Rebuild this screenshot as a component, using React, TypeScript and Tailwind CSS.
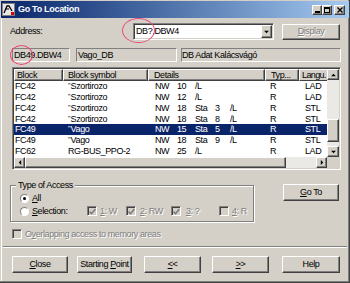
import React from "react";

const raised =
  "bg-[#d4d0c8] border border-t-white border-l-white border-r-[#404040] border-b-[#404040] shadow-[inset_-1px_-1px_0_#808080]";
const dis = "text-[#808080] [text-shadow:1px_1px_0_#fff]";

function Btn({ className, children, disabled }: { className: string; children: React.ReactNode; disabled?: boolean }) {
  return (
    <div className={`flex items-center justify-center h-[17px] ${raised} ${disabled ? dis : ""} ${className}`}>
      <span className="leading-none">{children}</span>
    </div>
  );
}

function Arrow({ dir }: { dir: "up" | "down" | "left" | "right" }) {
  const pts: Record<string, string> = {
    up: "1,4 4,1 7,4",
    down: "1,1 4,4 7,1",
    left: "4,1 1,4 4,7",
    right: "1,1 4,4 1,7",
  };
  const vb = dir === "up" || dir === "down" ? "0 0 8 5" : "0 0 5 8";
  const w = dir === "up" || dir === "down" ? 7 : 4;
  const h = dir === "up" || dir === "down" ? 4 : 7;
  return (
    <svg width={w} height={h} viewBox={vb}>
      <polygon points={pts[dir]} fill="#000" />
    </svg>
  );
}

function ArrBtn({ dir, className }: { dir: "up" | "down" | "left" | "right"; className: string }) {
  return (
    <div className={`flex items-center justify-center ${raised} ${className}`}>
      <Arrow dir={dir} />
    </div>
  );
}

function Check({ checked }: { checked: boolean }) {
  return (
    <div className="w-[10px] h-[10px] bg-[#d4d0c8] border border-t-[#808080] border-l-[#808080] border-r-white border-b-white shadow-[inset_1px_1px_0_#404040] flex items-center justify-center shrink-0">
      {checked && (
        <svg width="7" height="7" viewBox="0 0 7 7">
          <polyline points="0.5,3.5 2.5,5.5 6.5,1" fill="none" stroke="#808080" strokeWidth="1.6" />
        </svg>
      )}
    </div>
  );
}

function Radio({ on }: { on: boolean }) {
  return (
    <div className="w-[9px] h-[9px] rounded-full bg-white border border-t-[#808080] border-l-[#808080] border-r-white border-b-white flex items-center justify-center shrink-0">
      {on && <div className="w-[3px] h-[3px] rounded-full bg-black" />}
    </div>
  );
}

type Row = { b: string; s: string; q: boolean; d: string[]; t: string; l: string; sel?: boolean };
const rows: Row[] = [
  { b: "FC42", s: "Szortirozo", q: true, d: ["NW", "10", "/L"], t: "R", l: "LAD" },
  { b: "FC42", s: "Szortirozo", q: true, d: ["NW", "12", "/L"], t: "R", l: "LAD" },
  { b: "FC42", s: "Szortirozo", q: true, d: ["NW", "18", "Sta", "3", "/L"], t: "R", l: "STL" },
  { b: "FC42", s: "Szortirozo", q: true, d: ["NW", "18", "Sta", "8", "/L"], t: "R", l: "STL" },
  { b: "FC49", s: "Vago", q: true, d: ["NW", "15", "Sta", "5", "/L"], t: "R", l: "STL", sel: true },
  { b: "FC49", s: "Vago", q: true, d: ["NW", "18", "Sta", "9", "/L"], t: "R", l: "STL" },
  { b: "FC62", s: "RG-BUS_PPO-2", q: false, d: ["NW", "25", "/L"], t: "R", l: "LAD" },
];

const detW = ["w-[22px]", "w-[18px]", "w-[20px]", "w-[15px]", "w-[20px]"];

const hdr = `h-[12px] leading-[10px] overflow-hidden whitespace-nowrap bg-[#d4d0c8] border border-t-white border-l-white border-r-[#404040] border-b-[#404040] shadow-[inset_-1px_-1px_0_#808080]`;

export default function App() {
  return (
    <div className="relative w-[350px] h-[283px] bg-[#d4d0c8] overflow-hidden flex flex-col text-[9px] tracking-[-0.4px] text-black font-['Liberation_Sans',Arial,sans-serif] shadow-[inset_-1px_-1px_0_#404040,inset_-2px_-2px_0_#808080,inset_1px_1px_0_#d4d0c8,inset_2px_2px_0_#fff]">
      {/* Title bar */}
      <div className="mx-[1px] mt-[1px] h-[17px] flex items-center bg-linear-to-r from-[#0a246a] to-[#a6caf0] shrink-0">
        <svg width="13" height="13" viewBox="0 0 13 13" className="ml-[1px]">
          <rect x="0" y="0" width="13" height="13" fill="#d4d0c8" />
          <rect x="0.5" y="0.5" width="12" height="12" fill="#e8e8e8" stroke="#808080" />
          <polyline points="2,10 5,3 7,3 10,8" fill="none" stroke="#000" strokeWidth="1.3" />
          <line x1="3" y1="6" x2="7" y2="6" stroke="#000" strokeWidth="1" />
          <rect x="9" y="9" width="3" height="3" fill="#e00000" />
        </svg>
        <span className="ml-[3px] text-white font-bold text-[9px] tracking-[-0.3px] leading-none">Go To Location</span>
        <div className="flex-1" />
        <div className={`w-[10px] h-[10px] ${raised} flex items-end justify-center pb-[1px]`}>
          <div className="w-[5px] h-[2px] bg-black" />
        </div>
        <div className={`w-[10px] h-[10px] ${raised} flex items-center justify-center`}>
          <div className="w-[6px] h-[6px] border border-black border-t-2" />
        </div>
        <div className={`ml-[2px] mr-[4px] w-[11px] h-[10px] ${raised} flex items-center justify-center`}>
          <svg width="6" height="6" viewBox="0 0 6 6">
            <path d="M0.5 0.5 L5.5 5.5 M5.5 0.5 L0.5 5.5" stroke="#000" strokeWidth="1.4" />
          </svg>
        </div>
      </div>

      {/* Address row */}
      <div className="mt-[5px] h-[17px] flex items-center shrink-0">
        <span className="ml-[10px] w-[123px]">Address:</span>
        <div className="w-[141px] h-[17px] bg-white border border-t-[#808080] border-l-[#808080] border-r-white border-b-white shadow-[inset_1px_1px_0_#404040,inset_-1px_-1px_0_#d4d0c8] flex items-center">
          <span className="pl-[2px] flex-1">DB?.DBW4</span>
          <ArrBtn dir="down" className="w-[11px] h-[13px] mr-[1px]" />
        </div>
        <Btn disabled className="ml-[8px] w-[58px] !h-[16px]">
          <span className="underline underline-offset-1">D</span>isplay
        </Btn>
      </div>

      {/* Info fields */}
      <div className="mt-[8px] h-[14px] flex shrink-0">
        <div className="ml-[12px] w-[58px] h-[14px] border border-t-[#808080] border-l-[#808080] border-r-white border-b-white pl-[1px] leading-[12px]">DB49.DBW4</div>
        <div className="ml-[6px] w-[101px] h-[14px] border border-t-[#808080] border-l-[#808080] border-r-white border-b-white pl-[1px] leading-[12px]">Vago_DB</div>
        <div className="ml-[4px] w-[160px] h-[14px] border border-t-[#808080] border-l-[#808080] border-r-white border-b-white leading-[12px]">DB Adat Kalácsvágó</div>
      </div>

      {/* Table */}
      <div className="mt-[5px] ml-[12px] w-[329px] h-[103px] shrink-0 border border-t-[#808080] border-l-[#808080] border-r-white border-b-white shadow-[inset_1px_1px_0_#404040,inset_-1px_-1px_0_#d4d0c8] p-[1px] flex flex-col">
        <div className="flex h-[88px]">
          <div className="w-[313px] h-[88px] bg-white flex flex-col overflow-hidden">
            <div className="flex shrink-0">
              <div className={`${hdr} w-[49px] pl-[2px]`}>Block</div>
              <div className={`${hdr} w-[85px] pl-[4px]`}>Block symbol</div>
              <div className={`${hdr} w-[117px] pl-[5px]`}>Details</div>
              <div className={`${hdr} w-[34px] pl-[5px]`}>Typ...</div>
              <div className={`w-[28px] h-[12px] leading-[10px] overflow-hidden whitespace-nowrap bg-[#d4d0c8] border border-t-white border-l-white border-b-[#404040] border-r-0 pl-[2px] tracking-[-0.6px]`}>Langu.</div>
            </div>
            {rows.map((r, i) => (
              <div
                key={i}
                className={`flex h-[10.857px] leading-[10.857px] whitespace-nowrap shrink-0 ${r.sel ? "bg-[#0a246a] text-white" : ""}`}
              >
                <div className="w-[49px] pl-[1px]">{r.b}</div>
                <div className="w-[85px] pl-[5px]">
                  {r.q && <span className="text-[7px] relative -top-[1px] mr-[0.5px]">"</span>}
                  {r.s}
                </div>
                <div className="w-[117px] pl-[7px] flex">
                  {r.d.map((d, j) => (
                    <span key={j} className={detW[j]}>
                      {d}
                    </span>
                  ))}
                </div>
                <div className="w-[34px] pl-[5px]">{r.t}</div>
                <div className="w-[28px] pl-[6px]">{r.l}</div>
              </div>
            ))}
          </div>
          <div className="w-[12px] h-[88px] flex flex-col">
            <ArrBtn dir="up" className="w-[12px] h-[11px]" />
            <div className="h-[39px] bg-[#ebe9e5]" />
            <div className={`h-[23px] ${raised}`} />
            <div className="h-[4px] bg-[#ebe9e5]" />
            <ArrBtn dir="down" className="w-[12px] h-[11px]" />
          </div>
        </div>
        <div className="flex h-[11px]">
          <ArrBtn dir="left" className="w-[11px] h-[11px]" />
          <div className={`w-[261px] h-[11px] ${raised}`} />
          <div className="w-[30px] h-[11px] bg-[#ebe9e5]" />
          <ArrBtn dir="right" className="w-[11px] h-[11px]" />
          <div className="w-[12px] h-[11px] bg-[#d4d0c8]" />
        </div>
      </div>

      {/* Type of access + Go To */}
      <div className="mt-[14px] flex items-start shrink-0">
        <div className="relative ml-[10px] mt-[1px] w-[244px] h-[37px] border border-[#808080] shadow-[1px_1px_0_#fff,inset_1px_1px_0_#fff] pt-[7px] pl-[9px] flex flex-col gap-[3px]">
          <span className="absolute -top-[6px] left-[5px] px-[2px] bg-[#d4d0c8] leading-[10px]">Type of Access</span>
          <div className="h-[10px] flex items-center">
            <Radio on />
            <span className="ml-[3px] leading-none">
              <span className="underline underline-offset-1">A</span>ll
            </span>
          </div>
          <div className="h-[10px] flex items-center whitespace-nowrap">
            <Radio on={false} />
            <span className="ml-[3px] w-[55px] leading-none">
              <span className="underline underline-offset-1">S</span>election:
            </span>
            <Check checked />
            <span className={`ml-[3px] w-[26px] leading-none ${dis}`}>
              <span className="underline underline-offset-1">1</span>: W
            </span>
            <Check checked />
            <span className={`ml-[4px] w-[31px] leading-none ${dis}`}>
              <span className="underline underline-offset-1">2</span>: RW
            </span>
            <Check checked />
            <span className={`ml-[5px] w-[33px] leading-none ${dis}`}>
              <span className="underline underline-offset-1">3</span>: ?
            </span>
            <Check checked={false} />
            <span className={`ml-[3px] leading-none ${dis}`}>
              <span className="underline underline-offset-1">4</span>: R
            </span>
          </div>
        </div>
        <Btn className="ml-[29px] w-[56px]">
          <span className="underline underline-offset-1">G</span>o To
        </Btn>
      </div>

      {/* Overlapping */}
      <div className="mt-[7px] ml-[12px] h-[10px] flex items-center shrink-0">
        <Check checked={false} />
        <span className={`ml-[3px] leading-none ${dis}`}>
          O<span className="underline underline-offset-1">v</span>erlapping access to memory areas
        </span>
      </div>

      {/* Separator */}
      <div className="mt-[7px] mx-[3px] h-[2px] border-t border-t-[#808080] border-b border-b-white shrink-0" />

      {/* Buttons */}
      <div className="mt-[8px] flex shrink-0">
        <Btn className="ml-[12px] w-[56px]">
          <span className="underline underline-offset-1">C</span>lose
        </Btn>
        <Btn className="ml-[9px] w-[55px]">
          Starting <span className="underline underline-offset-1">P</span>oint
        </Btn>
        <Btn className="ml-[12px] w-[57px]">
          <span className="underline underline-offset-1">&lt;</span>&lt;
        </Btn>
        <Btn className="ml-[11px] w-[57px]">
          <span className="underline underline-offset-1">&gt;</span>&gt;
        </Btn>
        <Btn className="ml-[13px] w-[58px]">Help</Btn>
      </div>

      {/* Red annotation circles */}
      <div className="absolute left-[122px] top-[18px] w-[33px] h-[25px] rounded-[50%] border-[1.5px] border-[#ec4a7c]" />
      <div className="absolute left-[10px] top-[45px] w-[23px] h-[20px] rounded-[50%] border-[1.5px] border-[#ec4a7c]" />
    </div>
  );
}
